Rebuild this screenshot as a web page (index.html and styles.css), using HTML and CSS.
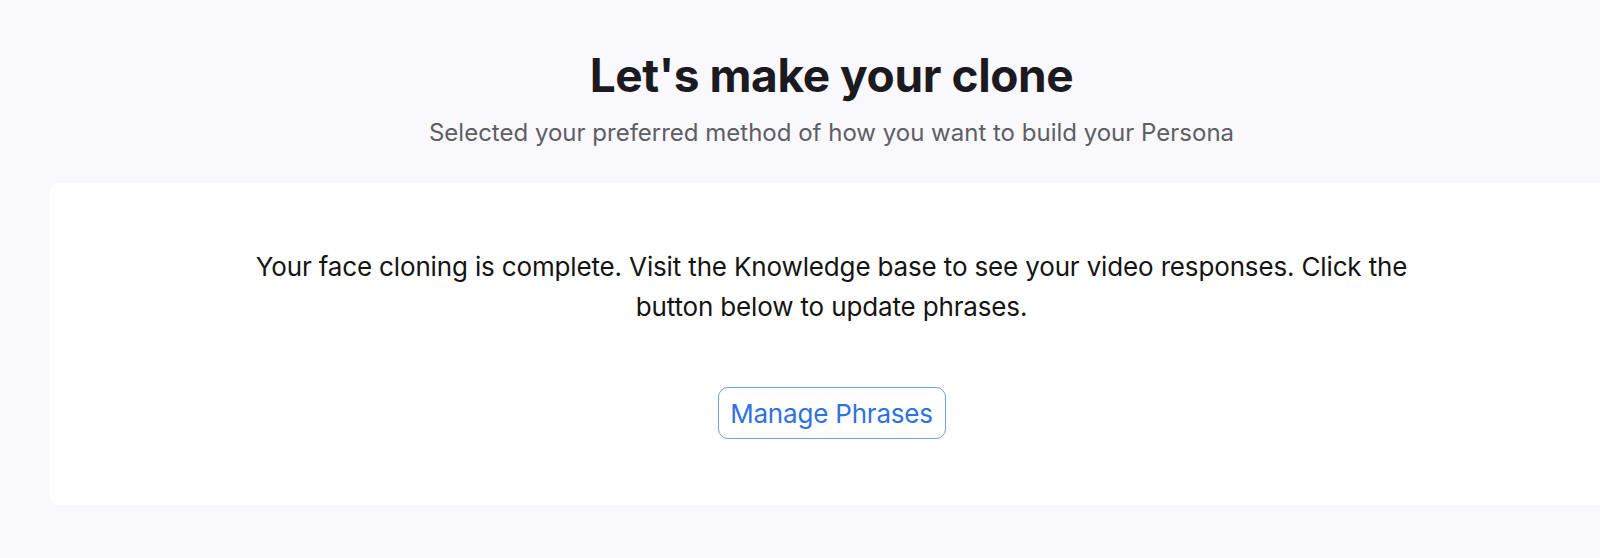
FILE: index.html
```html
<!DOCTYPE html>
<html lang="en">
<head>
<meta charset="utf-8">
<title>Let's make your clone</title>
<link rel="stylesheet" href="styles.css">
</head>
<body>
<main class="page">
  <header class="intro">
    <h1 class="title">Let's make your clone</h1>
    <p class="subtitle">Selected your preferred method of how you want to build your Persona</p>
  </header>
  <section class="card">
    <p class="message">Your face cloning is complete. Visit the Knowledge base to see your video responses. Click the button below to update phrases.</p>
    <button class="btn-outline" type="button">Manage Phrases</button>
  </section>
</main>
</body>
</html>
```
FILE: styles.css
```css
html, body {
  margin: 0;
  padding: 0;
  background: #f8f8fd;
}
body {
  font-family: Inter, "Noto Sans", sans-serif;
  color: #1b1b1f;
  height: 558px;
  overflow: hidden;
}
.page {
  padding: 47px 0 0 49px;
}
.intro {
  padding-left: 14px;
  text-align: center;
}
.title {
  margin: 0;
  font-size: 46px;
  line-height: 56px;
  font-weight: 700;
  color: #1b1b1f;
  letter-spacing: -0.4px;
}
.subtitle {
  margin: 14px 0 0;
  font-size: 24px;
  line-height: 32px;
  color: #5e5e64;
}
.card {
  margin-top: 34px;
  background: #ffffff;
  border-radius: 10px 0 0 10px;
  height: 322px;
  box-sizing: border-box;
  padding: 64px 0 0 14px;
  display: flex;
  flex-direction: column;
  align-items: center;
}
.message {
  margin: 0;
  max-width: 1180px;
  text-align: center;
  font-size: 26px;
  line-height: 40px;
  letter-spacing: -0.15px;
  color: #141414;
}
.btn-outline {
  margin-top: 60px;
  width: 228px;
  height: 52px;
  padding: 0;
  background: #ffffff;
  border: 1px solid #6f9ff0;
  border-radius: 10px;
  font-family: inherit;
  font-size: 26px;
  letter-spacing: -0.2px;
  color: #2e72dd;
  cursor: pointer;
}
```
